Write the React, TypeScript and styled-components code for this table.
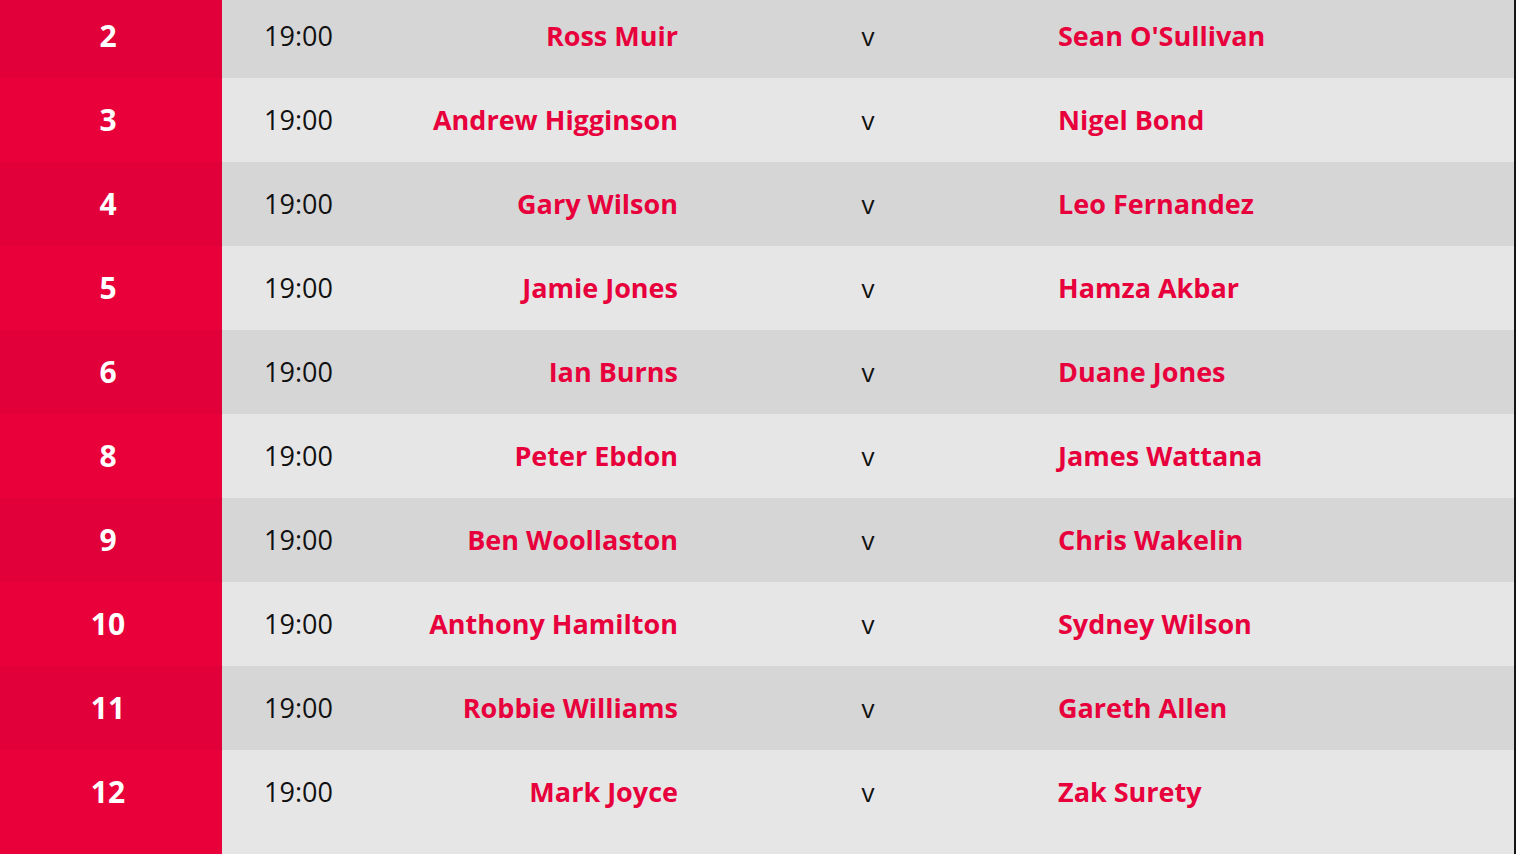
import React from "react";
import styled, { createGlobalStyle } from "styled-components";

const Global = createGlobalStyle`
  html, body { margin: 0; padding: 0; background: #161616; overflow: hidden; }
  body { font-family: "Open Sans", "Noto Sans", sans-serif; }
`;

const Table = styled.div`
  width: 1514px;
  min-height: calc(100vh + 6px);
  margin-top: -6px;
  display: flex;
  flex-direction: column;
`;

const Row = styled.div<{ $alt: boolean }>`
  display: grid;
  grid-template-columns: 222px 190px 266px 380px 1fr;
  flex: 0 0 84px;
  background: ${(p) => (p.$alt ? "#d6d6d6" : "#e6e6e6")};

  &:last-child {
    flex-grow: 1;
  }
`;

const Cell = styled.div`
  display: flex;
  align-items: flex-start;
  justify-content: center;
  line-height: 84px;
  white-space: nowrap;
`;

const NumberCell = styled(Cell)<{ $alt: boolean }>`
  background: ${(p) => (p.$alt ? "#e1003a" : "#e9003b")};
  color: #ffffff;
  font-weight: 700;
  font-size: 30px;
  padding-right: 6px;
`;

const TimeCell = styled(Cell)`
  justify-content: flex-start;
  padding-left: 42px;
  color: #111111;
  font-size: 27px;
  font-weight: 400;
`;

const HomeCell = styled(Cell)`
  justify-content: flex-end;
  color: #e8003c;
  font-size: 27px;
  font-weight: 700;
`;

const VersusCell = styled(Cell)`
  color: #111111;
  font-size: 26px;
  font-weight: 400;
`;

const AwayCell = styled(Cell)`
  justify-content: flex-start;
  color: #e8003c;
  font-size: 27px;
  font-weight: 700;
`;

const matches = [
  ["2", "Ross Muir", "Sean O'Sullivan"],
  ["3", "Andrew Higginson", "Nigel Bond"],
  ["4", "Gary Wilson", "Leo Fernandez"],
  ["5", "Jamie Jones", "Hamza Akbar"],
  ["6", "Ian Burns", "Duane Jones"],
  ["8", "Peter Ebdon", "James Wattana"],
  ["9", "Ben Woollaston", "Chris Wakelin"],
  ["10", "Anthony Hamilton", "Sydney Wilson"],
  ["11", "Robbie Williams", "Gareth Allen"],
  ["12", "Mark Joyce", "Zak Surety"],
];

export default function App() {
  return (
    <>
      <Global />
      <Table>
        {matches.map(([n, home, away], i) => {
          const alt = i % 2 === 0;
          return (
            <Row key={n} $alt={alt}>
              <NumberCell $alt={alt}>{n}</NumberCell>
              <TimeCell>19:00</TimeCell>
              <HomeCell>{home}</HomeCell>
              <VersusCell>v</VersusCell>
              <AwayCell>{away}</AwayCell>
            </Row>
          );
        })}
      </Table>
    </>
  );
}
